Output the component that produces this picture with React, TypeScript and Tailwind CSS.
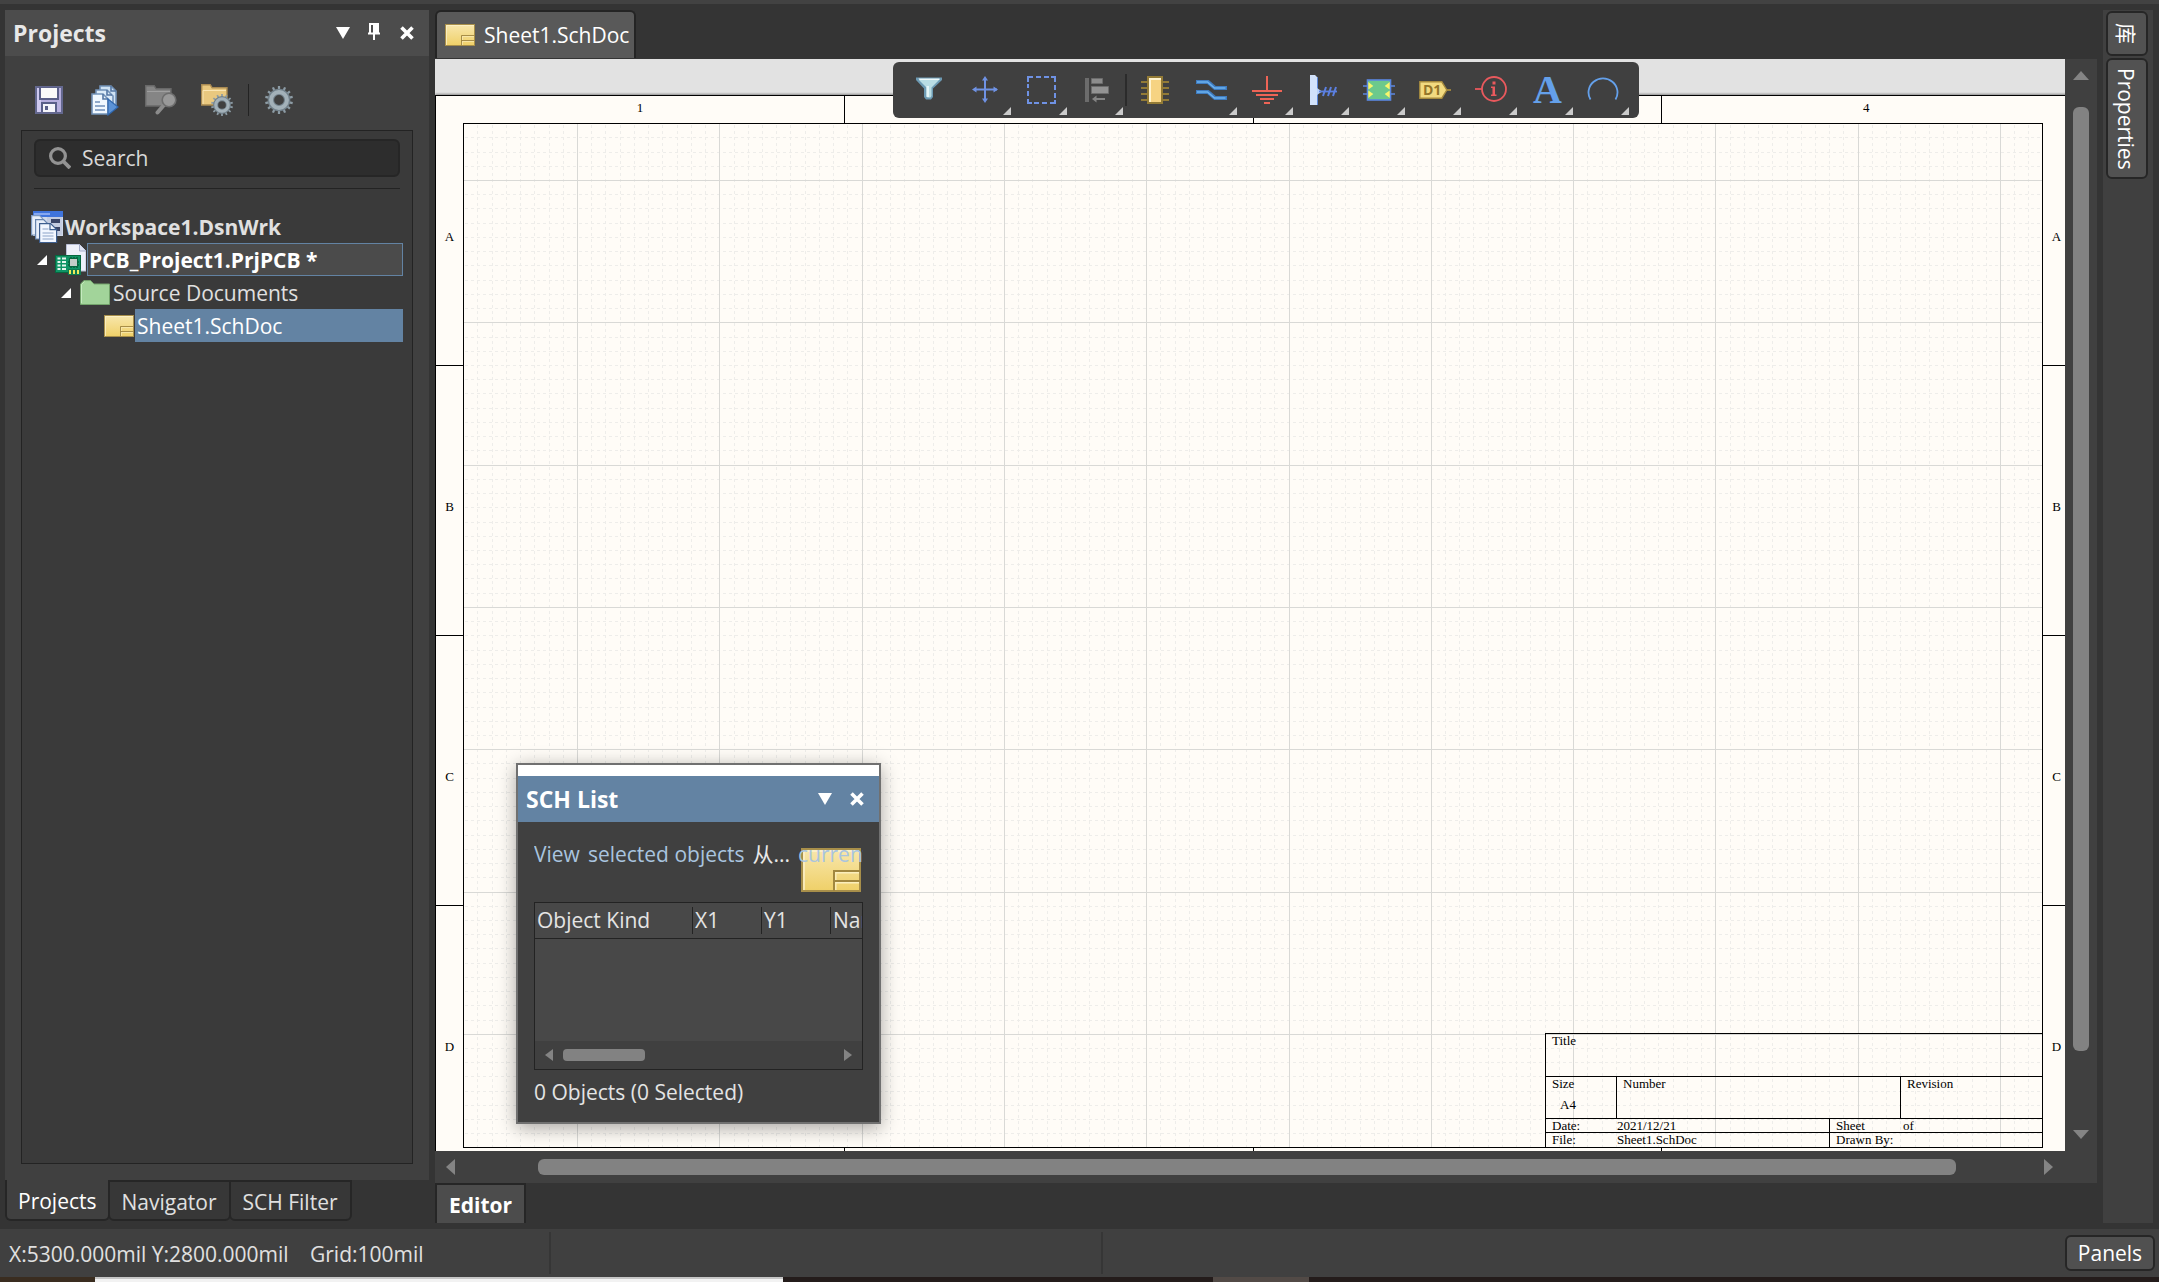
import React from "react";

type IconProps = { className?: string };

function SheetIcon({ className = "w-[30px] h-[22px]" }: IconProps) {
  return (
    <svg viewBox="0 0 30 22" className={className} aria-hidden="true">
      <defs>
        <linearGradient id="sheetFill" x1="0" y1="0" x2="0" y2="1">
          <stop offset="0" stopColor="#f8e7ad" />
          <stop offset="1" stopColor="#efd068" />
        </linearGradient>
      </defs>
      <rect x="0.5" y="0.5" width="29" height="21" fill="url(#sheetFill)" stroke="#a88f4a" />
      <path d="M1.5 21V1.5H29" fill="none" stroke="#fdf3d0" strokeWidth="0.7" />
      <path d="M16.5 21.5V11.5H29.5M16.5 16.5H29.5" fill="none" stroke="#a1873f" />
      <path d="M17.4 16V12.4H29M17.4 21V17.4H29" fill="none" stroke="#fbeebb" strokeWidth="0.7" />
    </svg>
  );
}

function SaveIcon() {
  return (
    <svg viewBox="0 0 28 28" className="h-7 w-7" aria-hidden="true">
      <rect width="28" height="28" fill="#64688f" />
      <rect x="2" y="2" width="24" height="24" fill="#b6aedd" />
      <rect x="2" y="2" width="4" height="24" fill="#cfcaf0" />
      <rect x="4" y="1" width="20" height="13" fill="#5a5f88" />
      <rect x="6" y="2" width="16" height="10" fill="#fafafa" />
      <rect x="6" y="16" width="16" height="11" fill="#5a5f88" />
      <rect x="8" y="18" width="12" height="8" fill="#f5f5fa" />
      <rect x="10" y="20" width="3" height="4" fill="#5a5f88" />
      <rect x="6" y="26" width="16" height="2" fill="#64688f" />
    </svg>
  );
}

function CompileIcon() {
  return (
    <svg viewBox="0 0 28 31" className="h-[31px] w-7" aria-hidden="true">
      <path d="M9 1h11l5 5v15H9z" fill="#cfe2f3" stroke="#7292b8" strokeWidth="1.6" />
      <path d="M5 5h11l6 6v14H5z" fill="#dcebf8" stroke="#7292b8" strokeWidth="1.6" />
      <path d="M1 9h11l5 5v15H1z" fill="#f0f8ff" stroke="#7292b8" strokeWidth="1.6" />
      <path d="M12 9v5h5M16 5v5h5M20 1v5h5" fill="none" stroke="#5578a5" strokeWidth="1.6" />
      <path d="M4 17h5M4 21h10M4 25h10" stroke="#6f8fba" strokeWidth="1.6" />
      <path d="M17 14v16l10-8z" fill="#5c93d6" stroke="#2f66ad" strokeWidth="1.2" />
    </svg>
  );
}

function FolderSearchIcon() {
  return (
    <svg viewBox="0 0 32 30" className="h-[30px] w-8" aria-hidden="true">
      <path d="M.7 21V.8h8.500l2 3H26V21z" fill="#858585" stroke="#686868" strokeWidth="1.400" />
      <path d="M2 6.500h23" stroke="#a0a0a0" />
      <path d="M19 20l-6.500 7.500" stroke="#8b8b8b" strokeWidth="4" strokeLinecap="round" />
      <circle cx="24" cy="15" r="6.800" fill="#999" stroke="#6d6d6d" strokeWidth="1.600" />
    </svg>
  );
}

const TEETH = Array.from({ length: 14 }, (_, i) => (i * 360) / 14);

function Gear({ cx, cy, r }: { cx: number; cy: number; r: number }) {
  return (
    <g>
      {TEETH.map((a) => (
        <rect
          key={a}
          x={cx - r * 0.08}
          y={cy - r}
          width={r * 0.16}
          height={r * 0.4}
          fill="#8d9ca5"
          transform={`rotate(${a} ${cx} ${cy})`}
        />
      ))}
      <circle cx={cx} cy={cy} r={r * 0.58} fill="none" stroke="#72818b" strokeWidth={r * 0.46} />
      <circle cx={cx} cy={cy} r={r * 0.57} fill="none" stroke="#a3b1b9" strokeWidth={r * 0.28} />
    </g>
  );
}

function FolderGearIcon() {
  return (
    <svg viewBox="0 0 32 32" className="h-8 w-8" aria-hidden="true">
      <path d="M.7 21V.8h8.500l2 3H26V21z" fill="#e9c87f" stroke="#a98a52" strokeWidth="1.400" />
      <path d="M2 6.500h23M2 6.500V20" stroke="#fbe6b4" fill="none" />
      <circle cx="21" cy="21" r="5" fill="#404040" />
      <Gear cx={21} cy={21} r={11} />
    </svg>
  );
}

function GearIcon() {
  return (
    <svg viewBox="0 0 28 28" className="h-7 w-7" aria-hidden="true">
      <Gear cx={14} cy={14} r={14} />
    </svg>
  );
}

function WorkspaceIcon() {
  return (
    <svg viewBox="0 0 32 32" className="h-8 w-8 shrink-0" aria-hidden="true">
      <rect x="2" y="0" width="30" height="25" fill="#cfd9ea" />
      <rect x="2" y="0" width="30" height="6" fill="#3f74dc" />
      <rect x="3" y="2" width="16" height="2" fill="#86a8f0" />
      <path d="M16 6h15v18H16z" fill="#c3cce0" />
      <path d="M20 8h9v4H20zM24 16h5v4h-5z" fill="#3a4668" />
      <path d="M.6 4.600h8l3 3V24H.6z" fill="#e8effa" stroke="#7f9abf" strokeWidth="1.200" />
      <path d="M4.600 8.600h8l4 4V28h-12z" fill="#e8effa" stroke="#6684ad" strokeWidth="1.200" />
      <path d="M8.600 12.600h11l6 6v13h-17z" fill="#f2f7ff" stroke="#3e5f8f" strokeWidth="1.200" />
      <path d="M19 12.600v6h6" fill="none" stroke="#3e5f8f" strokeWidth="1.200" />
      <path d="M11.500 18h6M11.500 22h11M11.500 25h11M11.500 28h11" stroke="#8ba4c8" strokeWidth="1.200" />
    </svg>
  );
}

function ProjectIcon() {
  return (
    <svg viewBox="0 0 31 31" className="h-[31px] w-[31px] shrink-0" aria-hidden="true">
      <path d="M11.500 .5h13L31 7v20H11.500z" fill="#eef0fa" stroke="#b9bfd6" />
      <path d="M24.500 .5V7H31" fill="#dfe3f2" stroke="#a5adca" />
      <rect x="0.500" y="11.500" width="25" height="17" fill="#0f9465" stroke="#06683f" />
      <path d="M2.500 14.500h3M7 14.500h4M2.500 18h3M7 18h4M2.500 21.500h3M7 21.500h4M2.500 25h3M7 25h4" stroke="#e6f5ee" strokeWidth="1.800" />
      <path d="M13 18h11M13 21h11M16 13v11M19 13v11M22 13v11" stroke="#0a3f2b" />
      <rect x="14.500" y="14.500" width="8" height="8" fill="#c4cdc8" stroke="#06683f" />
      <path d="M13 25h13v6H13z" fill="#0f7a50" />
      <path d="M15 26v4M19 26v4M23 26v4" stroke="#efe95a" strokeWidth="2" />
    </svg>
  );
}

function FolderIcon() {
  return (
    <svg viewBox="0 0 30 25" className="h-[25px] w-[30px] shrink-0" aria-hidden="true">
      <path d="M.5 24.500V4L4 .6h6.500L14 4h15.500v20.500z" fill="#a2d49a" stroke="#74a56c" />
      <path d="M1.500 23V4.500L4.500 1.600" fill="none" stroke="#c6ebc0" />
    </svg>
  );
}

function DownTriangle() {
  return (
    <svg viewBox="0 0 14 12" className="h-3 w-3.5" aria-hidden="true">
      <path d="M0 0h14L7 12z" fill="#fff" />
    </svg>
  );
}

function PinIcon() {
  return (
    <svg viewBox="0 0 12 17" className="h-[17px] w-3" aria-hidden="true">
      <path d="M1 0h10v10H1zM0 9.500h12v2H0zM5 11h2v6H5z" fill="#fff" />
      <path d="M3 2h2v7.500H3z" fill="#4c4c4c" />
    </svg>
  );
}

function CloseIcon() {
  return (
    <svg viewBox="0 0 14 14" className="h-3.5 w-3.5" aria-hidden="true">
      <path d="M1.500 1.500l11 11M12.500 1.500l-11 11" stroke="#fff" strokeWidth="3.600" />
    </svg>
  );
}

function Expander() {
  return (
    <svg viewBox="0 0 10 10" className="h-2.5 w-2.5 shrink-0" aria-hidden="true">
      <path d="M10 0v10H0z" fill="#fff" />
    </svg>
  );
}

function Arrow({ dir }: { dir: "up" | "down" | "left" | "right" }) {
  const d = {
    up: "M0 9L8 0l8 9z",
    down: "M0 0h16L8 9z",
    left: "M9 0v16L0 8z",
    right: "M0 0l9 8-9 8z",
  }[dir];
  const tall = dir === "left" || dir === "right";
  return (
    <svg
      viewBox={tall ? "0 0 9 16" : "0 0 16 9"}
      className={tall ? "h-4 w-[9px] shrink-0" : "h-[9px] w-4 shrink-0"}
      aria-hidden="true"
    >
      <path d={d} fill="#848484" />
    </svg>
  );
}

/* Drawing tools: each glyph sits in a 32 x 32 box. */
const TOOLS: { name: string; menu: boolean; glyph: React.ReactNode }[] = [
  {
    name: "Filter",
    menu: false,
    glyph: (
      <>
        <path d="M3 3.500h26v2.500l-9 8.500v8.500l-2 2.500h-5l-2-2.500V14.500L3 6z" fill="#6d9ab3" />
        <path d="M6 6h20l-7.500 7.500V22l-1 1.500h-3l-1-1.500v-8.500z" fill="#b9dde4" />
        <path d="M5.500 4.500h21v1.500h-20z" fill="#effafb" />
        <path d="M13.500 12h2.500v11h-2.500z" fill="#e4f5f7" />
      </>
    ),
  },
  {
    name: "Move",
    menu: true,
    glyph: (
      <>
        <path d="M16 4v23M5 15.500h23" stroke="#6f92e4" strokeWidth="2" />
        <path d="M16 2l3 4.500h-6zM16 29l3-4.500h-6zM3 15.500l4.500-3v6zM29 15.500l-4.500-3v6z" fill="#6f92e4" />
      </>
    ),
  },
  {
    name: "Select area",
    menu: true,
    glyph: (
      <path
        d="M3 8V3h5M11 3h5M19 3h5M26 3h4v5M30 11v5M30 19v5M30 26v3h-5M22 29h-5M14 29H9M7 29H3v-4M3 22v-5M3 14v-4"
        fill="none"
        stroke="#6f92e4"
        strokeWidth="2"
      />
    ),
  },
  {
    name: "Align",
    menu: true,
    glyph: (
      <>
        <path d="M4 4h4v24H4z" fill="#6c6c6c" />
        <path d="M10.500 4.500h11v5h-11z" fill="#8c8c8c" stroke="#6c6c6c" />
        <path d="M10.500 12.500h17v7h-17z" fill="#939393" stroke="#6c6c6c" />
        <path d="M14 25h10" stroke="#848484" strokeWidth="2" />
        <path d="M11 25l4.500-3.500v7z" fill="#848484" />
      </>
    ),
  },
  {
    name: "Place part",
    menu: false,
    glyph: (
      <>
        <path d="M2 8h28M2 14h28M2 20h28M2 26h28" stroke="#937b36" strokeWidth="2" />
        <rect x="9" y="3" width="14" height="26" fill="#f6d382" stroke="#937b36" strokeWidth="2" />
        <path d="M11 28V5h11" fill="none" stroke="#fff3cf" strokeWidth="2" />
      </>
    ),
  },
  {
    name: "Place wire",
    menu: true,
    glyph: (
      <>
        <path d="M1 8h12l7 6h12M1 18h12l7 6h12" fill="none" stroke="#3f7cc0" strokeWidth="4" />
        <path d="M2 8h10.500l7 6h11M2 18h10.500l7 6h11" fill="none" stroke="#6cb2f0" strokeWidth="1.600" />
      </>
    ),
  },
  {
    name: "Place ground",
    menu: true,
    glyph: (
      <path d="M16 2v15M1 17h30M5 21h22M9 25h14M13 29h6" stroke="#ee6456" strokeWidth="2" />
    ),
  },
  {
    name: "Place harness",
    menu: true,
    glyph: (
      <>
        <path d="M3 1h5l3 3v27H3z" fill="#d2e2fb" />
        <path d="M10 3l1 1v27h-1z" fill="#5b87da" />
        <path d="M10 14l5 3.500-5 3.500z" fill="#b9d2f8" />
        <path d="M12 17.500h18" stroke="#5b7fe0" strokeWidth="1.800" />
        <path d="M19 13l-3 9M24 13l-3 9M29 13l-3 9" stroke="#5b7fe0" strokeWidth="2" />
      </>
    ),
  },
  {
    name: "Place sheet symbol",
    menu: true,
    glyph: (
      <>
        <path d="M0 12h32M0 20h32" stroke="#5b87e0" strokeWidth="1.600" />
        <rect x="4.500" y="6" width="23" height="20" fill="#6cc98c" stroke="#5b87e0" strokeWidth="1.600" />
        <path d="M5.300 8l5 4-5 3.500zM5.300 16.500l5 3.500-5 4zM26.700 8l-5 4 5 3.500zM26.700 16.500l-5 3.500 5 4z" fill="#f8f66c" />
      </>
    ),
  },
  {
    name: "Place port",
    menu: true,
    glyph: (
      <>
        <path d="M25 16h7" stroke="#a58a3e" strokeWidth="1.800" />
        <path d="M.8 7.800h22l5 8.200-5 8.200h-22z" fill="#f2da80" stroke="#a58a3e" strokeWidth="1.400" />
        <text x="4" y="21" fontFamily="Open Sans, sans-serif" fontWeight="700" fontSize="14" fill="#93752a">
          D1
        </text>
      </>
    ),
  },
  {
    name: "Place directive",
    menu: true,
    glyph: (
      <>
        <circle cx="19" cy="15" r="12" fill="none" stroke="#e9595d" strokeWidth="1.800" />
        <path d="M0 15h7" stroke="#e9595d" strokeWidth="1.800" />
        <path d="M17.500 7.500h3v3h-3zM16 12.500h4v8h1.500v1.500h-5.500v-1.500h1.500v-6.500H16z" fill="#e9595d" />
      </>
    ),
  },
  {
    name: "Place text",
    menu: true,
    glyph: (
      <text x="2" y="29" fontFamily="Liberation Serif, serif" fontWeight="700" fontSize="40" fill="#64a0ea">
        A
      </text>
    ),
  },
  {
    name: "Place arc",
    menu: true,
    glyph: <path d="M3.500 25.500A14.500 14 0 1 1 28.500 25.500" fill="none" stroke="#64a0ea" strokeWidth="1.800" />,
  },
];

function ToolBar() {
  return (
    <div className="absolute left-1/2 top-[3px] flex h-14 -translate-x-1/2 rounded-md bg-[#404040] px-2">
      {TOOLS.map((t, i) => (
        <React.Fragment key={t.name}>
          {i === 4 && <span className="mt-3 h-8 w-0.5 bg-[#2b2b2b]" />}
          <button type="button" aria-label={t.name} className="relative flex w-14 justify-center pt-3">
            <svg viewBox="0 0 32 32" className="h-8 w-8" aria-hidden="true">
              {t.glyph}
            </svg>
            {t.menu && (
              <svg viewBox="0 0 8 8" className="absolute bottom-[3px] right-0.5 h-2 w-2" aria-hidden="true">
                <path d="M8 0v8H0z" fill="#cbcbcb" />
              </svg>
            )}
          </button>
        </React.Fragment>
      ))}
    </div>
  );
}

/* Grid lines of the drawing area; every tenth line is a major one. */
const PITCH = 14.23;

function SheetGrid() {
  const lines = (from: number, max: number) => {
    const out: { p: number; major: boolean }[] = [];
    for (let n = -10; from + n * PITCH < max - 2; n++) {
      const p = Math.round(from + n * PITCH);
      if (p > 2) out.push({ p, major: n % 10 === 0 });
    }
    return out;
  };
  const xs = lines(113, 1578);
  const ys = lines(56, 1023);
  return (
    <svg className="absolute inset-0 h-full w-full" shapeRendering="crispEdges" aria-hidden="true">
      {xs.filter((l) => !l.major).map((l) => (
        <line key={`x${l.p}`} x1={l.p + 0.5} x2={l.p + 0.5} y1="1" y2="1024" stroke="#eeedea" strokeDasharray="3 3" />
      ))}
      {ys.filter((l) => !l.major).map((l) => (
        <line key={`y${l.p}`} y1={l.p + 0.5} y2={l.p + 0.5} x1="1" x2="1578" stroke="#eeedea" strokeDasharray="3 3" />
      ))}
      {xs.filter((l) => l.major).map((l) => (
        <line key={`X${l.p}`} x1={l.p + 0.5} x2={l.p + 0.5} y1="0" y2="1024" stroke="#d9d9d6" />
      ))}
      {ys.filter((l) => l.major).map((l) => (
        <line key={`Y${l.p}`} y1={l.p + 0.5} y2={l.p + 0.5} x1="0" x2="1578" stroke="#d9d9d6" />
      ))}
    </svg>
  );
}

const COLUMNS = ["1", "2", "3", "4"];

function ZoneRow({ labelled = false }: { labelled?: boolean }) {
  return (
    <div className="flex h-[27px] shrink-0">
      {COLUMNS.map((n) => (
        <div key={n} className="flex flex-1 items-center justify-center border-r border-black pb-1 last:border-r-0">
          {labelled ? n : null}
        </div>
      ))}
    </div>
  );
}

function ZoneColumn() {
  return (
    <div className="-my-[27px] flex w-[27px] shrink-0 flex-col">
      {["A", "B", "C", "D"].map((n) => (
        <div key={n} className="flex flex-1 items-center justify-center border-b border-black pt-3 last:border-b-0">
          {n}
        </div>
      ))}
    </div>
  );
}

function TitleBlock() {
  return (
    <div className="absolute bottom-0 right-0 w-[497px] border-l border-t border-black leading-[14px]">
      <div className="h-[43px] border-b border-black pl-1.5">Title</div>
      <div className="flex h-[42px] border-b border-black">
        <div className="w-[71px] border-r border-black pl-1.5">
          <div>Size</div>
          <div className="mt-[7px] pl-2">A4</div>
        </div>
        <div className="flex-1 pl-1.5">Number</div>
        <div className="w-[142px] border-l border-black pl-1.5">Revision</div>
      </div>
      <div className="flex">
        <div className="flex-1">
          <div className="flex h-3.5 items-center border-b border-black pl-1.5">
            <span className="w-[65px]">Date:</span>2021/12/21
          </div>
          <div className="flex h-3.5 items-center pl-1.5">
            <span className="w-[65px]">File:</span>Sheet1.SchDoc
          </div>
        </div>
        <div className="w-[213px] border-l border-black">
          <div className="flex h-3.5 items-center border-b border-black pl-1.5">
            <span className="w-[67px]">Sheet</span>of
          </div>
          <div className="flex h-3.5 items-center pl-1.5">Drawn By:</div>
        </div>
      </div>
    </div>
  );
}

function Sheet() {
  return (
    <div className="mt-9 flex h-[1081px] w-[1636px] flex-col border border-black bg-[#fffcf7] font-['Liberation_Serif',serif] text-[13px] leading-none text-black shadow-[0_-1px_2px_rgba(0,0,0,0.4)]">
      <ZoneRow labelled />
      <div className="flex min-h-0 flex-1">
        <ZoneColumn />
        <div className="relative flex-1 border border-black">
          <SheetGrid />
          <TitleBlock />
        </div>
        <ZoneColumn />
      </div>
      <ZoneRow />
    </div>
  );
}

function SchList() {
  return (
    <section className="absolute left-[81px] top-[704px] w-[365px] border-2 border-[#707070] bg-[#404040] shadow-[0_4px_18px_rgba(0,0,0,0.35)]">
      <div className="h-[11px] bg-white" />
      <header className="flex h-[46px] items-center bg-[#6383a3] pl-2 pr-[15px]">
        <h2 className="flex-1 text-[23px] font-bold text-white">SCH List</h2>
        <button type="button" aria-label="Menu" className="mr-[18px]">
          <DownTriangle />
        </button>
        <button type="button" aria-label="Close">
          <CloseIcon />
        </button>
      </header>
      <div className="px-4 pb-4 pt-[18px]">
        <div className="relative flex h-[62px] items-start gap-2 overflow-hidden whitespace-nowrap text-[#a9c4df]">
          <span className="absolute right-0.5 top-2 flex">
            <SheetIcon className="h-11 w-[60px]" />
          </span>
          <span className="flex gap-2">
            <a href="#view">View</a>
            <a href="#scope">selected objects</a>
          </span>
          <span className="text-[#e8e8e8]">从...</span>
          <a href="#current" className="absolute left-[264px] top-0">
            current
          </a>
        </div>
        <div className="overflow-hidden border border-[#232323] bg-[#484848]">
          <table className="w-[364px] table-fixed border-collapse text-left">
            <thead>
              <tr className="h-[35px] border-b border-[#232323] text-[#e4e4e4]">
                <th className="w-[157px] p-0 pl-0.5 font-normal">Object Kind</th>
                {["X1", "Y1", "Name"].map((h) => (
                  <th key={h} className="w-[69px] p-0 font-normal">
                    <div className="border-l border-[#232323] pl-0.5 leading-[27px]">{h}</div>
                  </th>
                ))}
              </tr>
            </thead>
          </table>
          <div className="h-[102px]" />
          <div className="flex h-7 items-center bg-[#404040] px-2.5">
            <svg viewBox="0 0 8 12" className="h-3 w-2" aria-hidden="true">
              <path d="M8 0v12L0 6z" fill="#848484" />
            </svg>
            <span className="ml-2.5 h-3 w-[82px] rounded bg-[#828282]" />
            <span className="flex-1" />
            <svg viewBox="0 0 8 12" className="h-3 w-2" aria-hidden="true">
              <path d="M0 0v12l8-6z" fill="#848484" />
            </svg>
          </div>
        </div>
        <p className="mt-2 text-[#e4e4e4]">0 Objects (0 Selected)</p>
      </div>
    </section>
  );
}

function ProjectsPanel() {
  return (
    <aside className="flex w-[424px] shrink-0 flex-col">
      <section className="flex min-h-0 flex-1 flex-col bg-[#404040]">
        <header className="flex h-[46px] items-center bg-[#4c4c4c] pl-2 pr-[15px]">
          <h2 className="flex-1 text-[23px] font-bold text-[#e8e8e8]">Projects</h2>
          <button type="button" aria-label="Menu" className="mr-[18px]">
            <DownTriangle />
          </button>
          <button type="button" aria-label="Pin" className="mb-1 mr-5">
            <PinIcon />
          </button>
          <button type="button" aria-label="Close">
            <CloseIcon />
          </button>
        </header>
        <div className="flex h-[74px] items-center pb-1.5 pl-[30px] pt-5">
          <button type="button" aria-label="Save" className="mr-7">
            <SaveIcon />
          </button>
          <button type="button" aria-label="Compile" className="mr-[26px]">
            <CompileIcon />
          </button>
          <button type="button" aria-label="Show in explorer" className="mr-6">
            <FolderSearchIcon />
          </button>
          <button type="button" aria-label="Project options" className="mr-[15px]">
            <FolderGearIcon />
          </button>
          <span className="mr-4 h-8 w-px bg-[#232323]" />
          <button type="button" aria-label="Settings">
            <GearIcon />
          </button>
        </div>
        <div className="mx-4 mb-4 flex-1 border border-[#232323] bg-[#3a3a3a]">
          <div className="mx-3 border-b border-[#232323] pb-[11px] pt-2">
            <label className="flex h-[38px] items-center rounded-md border-2 border-[#262626] bg-[#2d2d2d] pl-[13px]">
              <svg viewBox="0 0 22 22" className="h-[22px] w-[22px] shrink-0" aria-hidden="true">
                <circle cx="9" cy="9" r="7.400" fill="none" stroke="#939393" strokeWidth="3.200" />
                <path d="M14 14l7 7" stroke="#939393" strokeWidth="3.800" />
              </svg>
              <input
                type="text"
                aria-label="Search"
                placeholder="Search"
                className="ml-[11px] w-full bg-transparent outline-none placeholder:text-[#d8d8d8]"
              />
            </label>
          </div>
          <ul className="ml-[9px] mr-[9px] mt-[21px] text-[#e0e0e0]">
            <li className="flex h-[33px] items-center">
              <WorkspaceIcon />
              <span className="ml-0.5 font-bold">Workspace1.DsnWrk</span>
            </li>
            <li className="flex h-[33px] items-center pl-1.5">
              <Expander />
              <span className="ml-2 flex">
                <ProjectIcon />
              </span>
              <span className="ml-px flex h-full flex-1 items-center border border-[#6383a3] bg-[#4b4b4b] pl-px font-bold text-white">
                PCB_Project1.PrjPCB *
              </span>
            </li>
            <li className="flex h-[33px] items-center pl-[30px]">
              <Expander />
              <span className="ml-[9px] flex">
                <FolderIcon />
              </span>
              <span className="ml-[3px]">Source Documents</span>
            </li>
            <li className="flex h-[33px] items-center pl-[73px]">
              <SheetIcon className="h-[22px] w-[30px] shrink-0" />
              <span className="ml-px flex h-full flex-1 items-center bg-[#6383a3] pl-0.5 text-white">Sheet1.SchDoc</span>
            </li>
          </ul>
        </div>
      </section>
      <nav className="mb-0.5 flex h-[41px]">
        <button type="button" className="rounded-b-md border-2 border-t-0 border-[#262626] bg-[#404040] px-[11px] pt-0.5 text-white">
          Projects
        </button>
        {["Navigator", "SCH Filter"].map((t) => (
          <button key={t} type="button" className="-ml-0.5 rounded-b-md border-2 border-[#262626] bg-[#373737] px-3 pt-0.5 text-[#e0e0e0]">
            {t}
          </button>
        ))}
      </nav>
    </aside>
  );
}

function Editor() {
  return (
    <main className="flex min-w-0 flex-1 flex-col">
      <div className="flex h-[49px] shrink-0">
        <button
          type="button"
          className="mb-px flex items-center gap-[9px] rounded-t-md border-2 border-b-0 border-[#242424] bg-[#595959] pl-2 pr-[5px] text-white"
        >
          <SheetIcon />
          Sheet1.SchDoc
        </button>
      </div>
      <div className="relative flex min-h-0 flex-1 flex-col bg-[#404040]">
        <div className="flex min-h-0 flex-1">
          <div className="min-w-0 flex-1 overflow-hidden bg-[#e2e2e2]">
            <Sheet />
          </div>
          <div className="flex w-8 flex-col items-center pb-3 pt-3">
            <Arrow dir="up" />
            <span className="mb-[79px] mt-[27px] w-4 flex-1 rounded-md bg-[#828282]" />
            <Arrow dir="down" />
          </div>
        </div>
        <div className="flex h-8 items-center pl-[11px] pr-11">
          <Arrow dir="left" />
          <span className="ml-[83px] mr-[88px] h-4 flex-1 rounded-md bg-[#828282]" />
          <Arrow dir="right" />
        </div>
        <ToolBar />
        <SchList />
      </div>
      <div className="flex h-10 shrink-0">
        <button type="button" className="border-2 border-b-0 border-[#262626] bg-[#4c4c4c] px-3 pt-px font-bold text-white">
          Editor
        </button>
      </div>
    </main>
  );
}

const SIDE_TAB =
  "flex items-center justify-center rounded-md border-2 border-[#262626] bg-[#525252] pr-0.5 text-white [writing-mode:vertical-rl] [text-orientation:sideways]";

export default function App() {
  return (
    <div className="flex h-screen flex-col overflow-hidden bg-[#343434] font-['Open_Sans','Noto_Sans_CJK_SC',sans-serif] text-[21px] leading-7">
      <div className="h-1 shrink-0 bg-[#424242]" />
      <div className="flex min-h-0 flex-1 gap-1.5 pb-1.5 pl-[5px] pr-1.5 pt-1.5">
        <ProjectsPanel />
        <Editor />
        <aside className="flex w-[50px] shrink-0 flex-col items-start gap-0.5 bg-[#404040] pl-[3px] pt-px">
          <button type="button" className={`${SIDE_TAB} h-[45px] w-[42px]`}>
            库
          </button>
          <button type="button" className={`${SIDE_TAB} h-[121px] w-[42px]`}>
            Properties
          </button>
        </aside>
      </div>
      <footer className="flex h-12 shrink-0 items-center bg-[#404040] pl-[9px] pr-1 text-[#e0e0e0]">
        <span className="w-[301px] pt-0.5">X:5300.000mil Y:2800.000mil</span>
        <span className="w-[239px] pt-0.5">Grid:100mil</span>
        <span className="h-[42px] w-0.5 bg-[#363636]" />
        <span className="ml-[550px] h-[42px] w-0.5 bg-[#363636]" />
        <button type="button" className="mb-px ml-auto h-9 w-[90px] rounded-md border-2 border-[#262626] bg-[#505050] text-white">
          Panels
        </button>
      </footer>
      <div className="flex h-[5px] shrink-0 bg-[#241c1b]">
        <span className="w-[95px] bg-[#3a2d20]" />
        <span className="w-[688px] border-t-2 border-[#c6c6c6] bg-[#f2f2f2]" />
        <span className="ml-[430px] w-24 bg-[#524a46]" />
      </div>
    </div>
  );
}
